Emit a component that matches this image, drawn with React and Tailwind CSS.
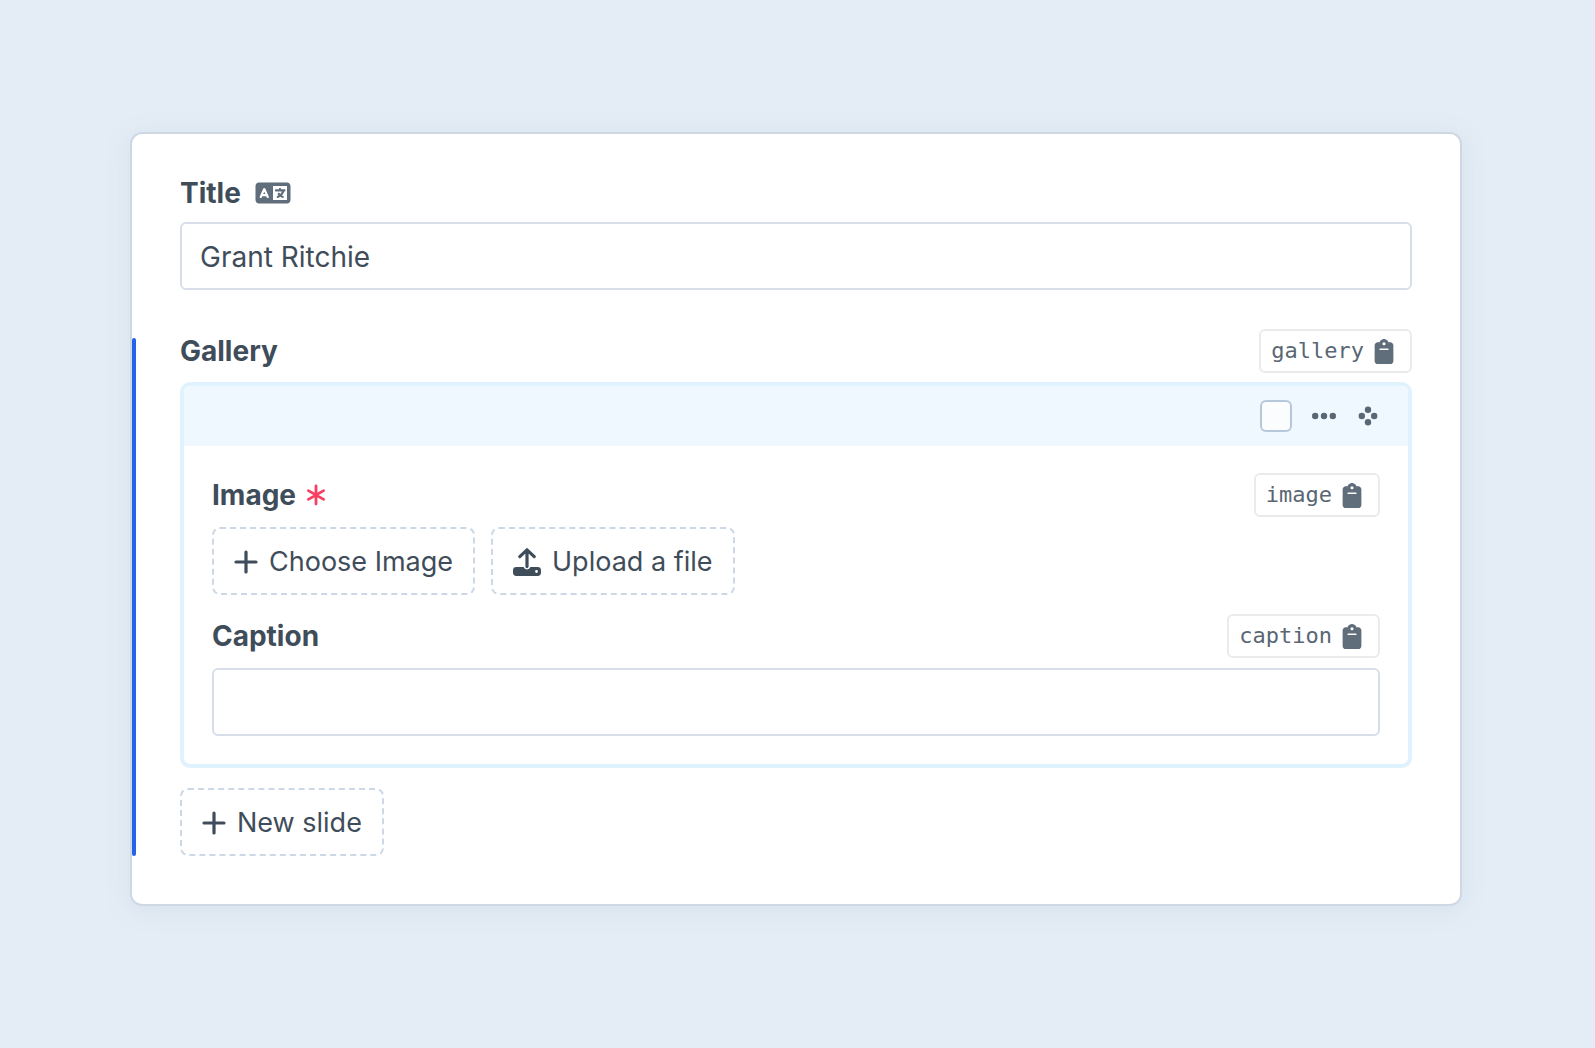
// src/App.jsx
import { useState } from "react";
import { FaClipboard, FaLanguage } from "react-icons/fa6";

function PlusIcon() {
  return (
    <svg className="w-6 h-6" viewBox="0 0 24 24" fill="none" stroke="currentColor" strokeWidth="3.2" strokeLinecap="round" aria-hidden="true">
      <path d="M12 2v20M2 12h20" />
    </svg>
  );
}

function UploadIcon() {
  return (
    <svg className="w-7 h-7" viewBox="0 0 28 28" fill="none" aria-hidden="true">
      <path
        fillRule="evenodd"
        fill="currentColor"
        d="M3.4 19H10.6A3.6 3.6 0 0 0 17.4 19H24.6A3.4 3.4 0 0 1 28 22.4V24.6A3.4 3.4 0 0 1 24.6 28H3.4A3.4 3.4 0 0 1 0 24.6V22.4A3.4 3.4 0 0 1 3.4 19ZM23.5 22.1a1.4 1.4 0 1 0 0 2.8a1.4 1.4 0 1 0 0-2.8Z"
      />
      <path d="M14 18.6V2M6.8 8.6L14 1.8l7.2 6.8" stroke="currentColor" strokeWidth="3.2" strokeLinecap="round" strokeLinejoin="round" />
    </svg>
  );
}

function DotsIcon() {
  return (
    <svg className="w-6 h-6" viewBox="0 0 24 24" fill="currentColor" aria-hidden="true">
      <circle cx="3.2" cy="12" r="3.2" />
      <circle cx="12" cy="12" r="3.2" />
      <circle cx="20.8" cy="12" r="3.2" />
    </svg>
  );
}

function MoveIcon() {
  return (
    <svg className="w-5 h-5" viewBox="0 0 20 20" fill="currentColor" aria-hidden="true">
      <circle cx="10" cy="3.8" r="3.2" />
      <circle cx="3.8" cy="10" r="3.2" />
      <circle cx="16.2" cy="10" r="3.2" />
      <circle cx="10" cy="16.2" r="3.2" />
    </svg>
  );
}

function RequiredIcon() {
  return (
    <svg className="w-5 h-6 text-[#fa3e5f]" viewBox="0 0 20 24" fill="none" stroke="currentColor" strokeWidth="2.8" strokeLinecap="round" role="img" aria-label="Required">
      <path d="M10 3v18M2.4 7.6l15.2 8.8M17.6 7.6l-15.2 8.8" />
    </svg>
  );
}

// Shows the field handle, click copies it
function HandleBadge({ handle }) {
  return (
    <button
      type="button"
      onClick={() => navigator.clipboard?.writeText(handle)}
      className="flex items-center gap-[10px] h-11 pl-[10px] pr-4 border-2 border-[#ebebec] rounded-md bg-white text-[#596673] font-['DejaVu_Sans_Mono',monospace] text-[22px] leading-7 cursor-pointer"
    >
      {handle}
      <FaClipboard className="w-5 h-[25px] text-[#606d7b]" />
    </button>
  );
}

function DashedButton({ icon, children, onClick }) {
  return (
    <button
      type="button"
      onClick={onClick}
      className="flex items-center gap-[11px] h-[68px] px-5 pt-[2px] border-2 border-dashed border-[#cdd8e6] rounded-lg text-[27px] cursor-pointer"
    >
      {icon}
      {children}
    </button>
  );
}

const inputClass = "block w-full h-[68px] px-[18px] pt-[2px] border-2 border-[#d7deea] rounded-md bg-white outline-none";

export default function App() {
  const [title, setTitle] = useState("Grant Ritchie");
  const [slides, setSlides] = useState([{ id: 1, caption: "", selected: false }]);

  const updateSlide = (id, changes) => {
    setSlides(slides.map(s => s.id === id ? { ...s, ...changes } : s));
  };

  const addSlide = () => {
    setSlides([...slides, { id: slides.length + 1, caption: "", selected: false }]);
  };

  return (
    <main className="min-h-screen pt-[132px] pb-[142px] pl-[130px] pr-[133px] bg-[#e4ecf5] text-[#3f4d5a] font-[Inter,sans-serif] text-[28px] leading-8">
      <form className="p-12 border-2 border-[#cdd8e4] rounded-xl bg-white shadow-[0_4px_24px_#d5e2ec]">
        {/* Title */}
        <div className="flex items-center gap-[14px] h-[22px] mb-[18px]">
          <label htmlFor="title" className="font-bold">Title</label>
          <FaLanguage className="w-9 h-7 text-[#606d7b]" />
        </div>
        <input id="title" type="text" className={inputClass} value={title} onChange={e => setTitle(e.target.value)} />

        {/* Gallery */}
        <section className="relative mt-12" aria-labelledby="gallery">
          <div className="absolute -left-12 inset-y-0 w-1 rounded-sm bg-[#2563eb]" />
          <div className="flex items-center justify-between h-[26px] mb-[18px]">
            <h2 id="gallery" className="font-bold">Gallery</h2>
            <HandleBadge handle="gallery" />
          </div>

          {slides.map(slide => (
            <div key={slide.id} className="mb-5 border-4 border-[#e0f2fe] rounded-[10px]">
              <div className="flex items-center justify-end h-[60px] pr-[30px] rounded-t-md bg-[#f0f8ff] text-[#596673]">
                <input
                  type="checkbox"
                  aria-label="Select slide"
                  checked={slide.selected}
                  onChange={e => updateSlide(slide.id, { selected: e.target.checked })}
                  className="appearance-none w-8 h-8 border-2 border-[#b7c7da] rounded-md bg-[#fbfcfe] checked:bg-[#596673]"
                />
                <button type="button" aria-label="Actions" className="ml-5 cursor-pointer"><DotsIcon /></button>
                <button type="button" aria-label="Reorder" className="ml-[22px] cursor-move"><MoveIcon /></button>
              </div>

              <div className="px-7 pt-[27px] pb-7">
                <div className="flex items-center justify-between h-11 mb-[10px]">
                  <h3 className="flex items-center gap-[10px] font-bold">
                    Image
                    <RequiredIcon />
                  </h3>
                  <HandleBadge handle="image" />
                </div>
                <div className="flex gap-4 mb-[19px]">
                  <DashedButton icon={<PlusIcon />}>Choose Image</DashedButton>
                  <DashedButton icon={<UploadIcon />}>Upload a file</DashedButton>
                </div>

                <div className="flex items-center justify-between h-11 mb-[10px]">
                  <label htmlFor={`caption-${slide.id}`} className="font-bold">Caption</label>
                  <HandleBadge handle="caption" />
                </div>
                <input
                  id={`caption-${slide.id}`}
                  type="text"
                  className={inputClass}
                  value={slide.caption}
                  onChange={e => updateSlide(slide.id, { caption: e.target.value })}
                />
              </div>
            </div>
          ))}

          <div className="flex">
            <DashedButton icon={<PlusIcon />} onClick={addSlide}>New slide</DashedButton>
          </div>
        </section>
      </form>
    </main>
  );
}
